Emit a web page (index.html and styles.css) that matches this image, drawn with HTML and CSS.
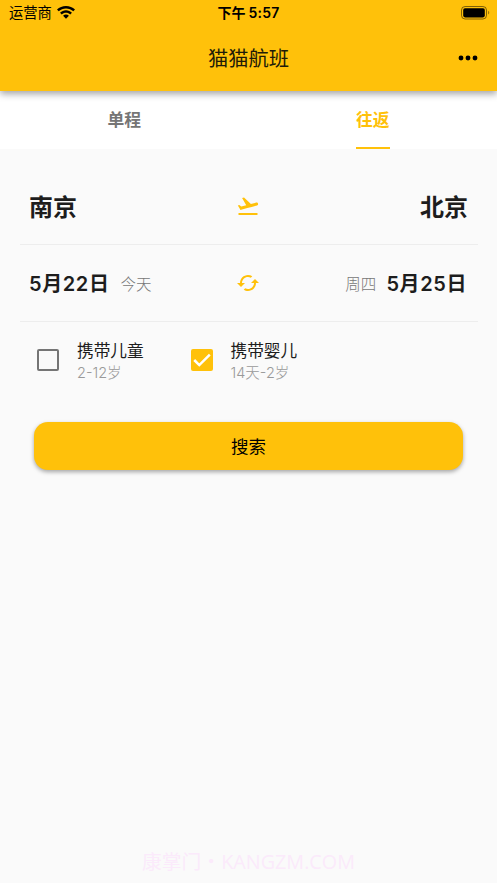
FILE: index.html
```html
<!DOCTYPE html>
<html lang="zh-CN">
<head>
<meta charset="utf-8">
<title>猫猫航班</title>
<link rel="stylesheet" href="styles.css">
</head>
<body>
<header class="appbar">
  <div class="status">
    <div class="carrier"><span>运营商</span>
      <svg class="wifi" viewBox="0 0 18 13" width="18" height="13"><path d="M9 0C5.500 0 2.300 1.350 0 3.600l1.700 1.750C3.600 3.500 6.200 2.400 9 2.400s5.400 1.100 7.300 2.950L18 3.600C15.700 1.350 12.500 0 9 0zM9 4.300c-2.300 0-4.400.9-5.950 2.400l1.750 1.750C5.900 7.400 7.400 6.750 9 6.750s3.100.65 4.200 1.700l1.750-1.750C13.400 5.200 11.300 4.300 9 4.300zM9 8.600c-1.150 0-2.150.45-2.900 1.150L9 12.700l2.900-2.950C11.150 9.050 10.150 8.600 9 8.600z"/></svg>
    </div>
    <div class="clock">下午<span class="time">5:57</span></div>
    <div class="power">
      <svg viewBox="0 0 29 14" width="29" height="14"><rect x=".5" y=".5" width="25" height="12.500" rx="3.600" fill="none" stroke="#000" stroke-opacity=".5"/><rect x="2.200" y="2.200" width="21.600" height="9.200" rx="1.800"/><path d="M27.300 4.700c1.200.5 1.200 3.200 0 3.700z" opacity=".55"/></svg>
    </div>
  </div>
  <div class="toolbar">
    <h1>猫猫航班</h1>
    <svg class="more" viewBox="0 0 20 6" width="20" height="6"><circle cx="3" cy="3" r="2.450"/><circle cx="10" cy="3" r="2.450"/><circle cx="17" cy="3" r="2.450"/></svg>
  </div>
</header>
<nav class="tabs">
  <div class="tab"><span>单程</span></div>
  <div class="tab active"><span>往返</span></div>
</nav>
<main>
  <section class="row cities">
    <span class="city">南京</span>
    <svg class="icon" viewBox="0 0 24 24"><path d="M2.500 19h19v2h-19zm19.570-9.360c-.21-.8-1.040-1.280-1.840-1.060L14.920 10l-6.900-6.430-1.930.51 4.140 7.170-4.970 1.330-1.970-1.540-1.450.39 1.820 3.160.77 1.330 1.600-.43 5.310-1.420 4.350-1.160L21 11.490c.81-.23 1.280-1.050 1.070-1.850z"/></svg>
    <span class="city end">北京</span>
  </section>
  <section class="row dates">
    <div class="date"><b>5月22日</b><small>今天</small></div>
    <svg class="icon" viewBox="0 0 24 24"><path d="M19 8l-4 4h3c0 3.310-2.690 6-6 6-1.010 0-1.970-.25-2.800-.7l-1.460 1.460C8.970 19.540 10.430 20 12 20c4.420 0 8-3.580 8-8h3l-4-4zM6 12c0-3.310 2.690-6 6-6 1.010 0 1.970.25 2.800.7l1.460-1.460C15.030 4.460 13.570 4 12 4c-4.420 0-8 3.580-8 8H1l4 4 4-4H6z"/></svg>
    <div class="date end"><small>周四</small><b>5月25日</b></div>
  </section>
  <section class="options">
    <div class="option">
      <span class="box"></span>
      <div class="label"><p>携带儿童</p><small>2-12岁</small></div>
    </div>
    <div class="option">
      <span class="box checked"><svg viewBox="0 0 22 22" width="22" height="22"><path d="M3.200 11l5.100 5.100L18.800 5.700" fill="none" stroke="#fff" stroke-width="2.500"/></svg></span>
      <div class="label"><p>携带婴儿</p><small>14天-2岁</small></div>
    </div>
  </section>
  <button class="search" type="button">搜索</button>
</main>
<footer>康掌门・KANGZM.COM</footer>
</body>
</html>
```
FILE: styles.css
```css
* { box-sizing: border-box; margin: 0; padding: 0; }
body {
  height: 883px;
  display: flex;
  flex-direction: column;
  overflow: hidden;
  background: #fafafa;
  color: #1d1d1d;
  font-family: Inter, "Noto Sans CJK SC", sans-serif;
}
.appbar {
  height: 91px;
  background: #ffc10a;
  color: #000;
  box-shadow: 0 3px 7px rgba(0, 0, 0, .36);
  z-index: 1;
  flex: none;
}
.status {
  height: 26px;
  display: grid;
  grid-template-columns: 1fr auto 1fr;
  align-items: center;
  font-size: 14px;
  line-height: 26px;
  padding: 0 7px 0 9px;
}
.carrier { display: flex; align-items: center; gap: 5px; font-size: 14.3px; }
.wifi { margin-top: -2px; }
.clock { font-weight: 600; margin-left: -2px; }
.time { margin-left: 3px; letter-spacing: .2px; }
.power { display: flex; justify-content: flex-end; margin-top: -1px; }
.toolbar {
  height: 64px;
  display: grid;
  grid-template-columns: 1fr auto 1fr;
  align-items: center;
  padding: 0 19px;
}
h1 { grid-column: 2; padding-top: 2px; font-size: 20.3px; font-weight: 400; line-height: 30px; color: #211b08; }
.more { justify-self: end; }
.tabs { height: 58px; flex: none; display: flex; background: #fff; }
.tab {
  flex: 1;
  display: flex;
  justify-content: center;
  font-size: 16.800px;
  font-weight: 600;
  color: #757575;
}
.tab span { height: 58px; line-height: 58px; }
.tab.active { color: #ffc10a; }
.tab.active span { border-bottom: 2.500px solid #ffc10a; }
main { padding: 19px 19px 0 20px; }
.row {
  display: grid;
  grid-template-columns: 1fr 24px 1fr;
  align-items: center;
  height: 77px;
  padding: 0 10px 0 9px;
  border-bottom: 1px solid #ededed;
}
.icon { width: 24px; height: 24px; margin-left: -.5px; fill: #ffc10a; }
.city { padding-bottom: 2px; font-size: 24px; font-weight: 600; }
.end { justify-self: end; }
.date { display: flex; align-items: center; gap: 11px; padding-bottom: 1px; }
.date b { font-size: 20px; font-weight: 600; letter-spacing: .6px; }
.date small { font-size: 15.500px; font-weight: 300; color: #777; }
.date.end { gap: 10px; margin-right: 1px; }
.options { display: flex; padding: 16px 0 0 17px; height: 100px; }
.option { width: 153.500px; display: flex; gap: 18px; }
.box { width: 22px; height: 22px; margin-top: 11px; border: 2px solid #757575; border-radius: 2px; }
.box.checked { border: 0; background: #ffc10a; }
.box svg { display: block; }
.label p { padding-top: 1px; font-size: 16.700px; line-height: 24px; }
.label small { display: block; font-size: 14.500px; font-weight: 300; line-height: 19px; color: #999; }
.search {
  display: block;
  width: 429px;
  height: 48px;
  margin-left: 14px;
  border: 0;
  border-radius: 14px;
  background: #ffc10a;
  box-shadow: 0 2px 4px rgba(0, 0, 0, .34);
  color: #000;
  font: 400 17.500px/50px Inter, "Noto Sans CJK SC", sans-serif;
}
footer {
  margin-top: auto;
  height: 43px;
  text-align: center;
  color: #fbeafb;
  font: 400 19.800px/43px "Open Sans", "Noto Sans CJK SC", sans-serif;
}
```
